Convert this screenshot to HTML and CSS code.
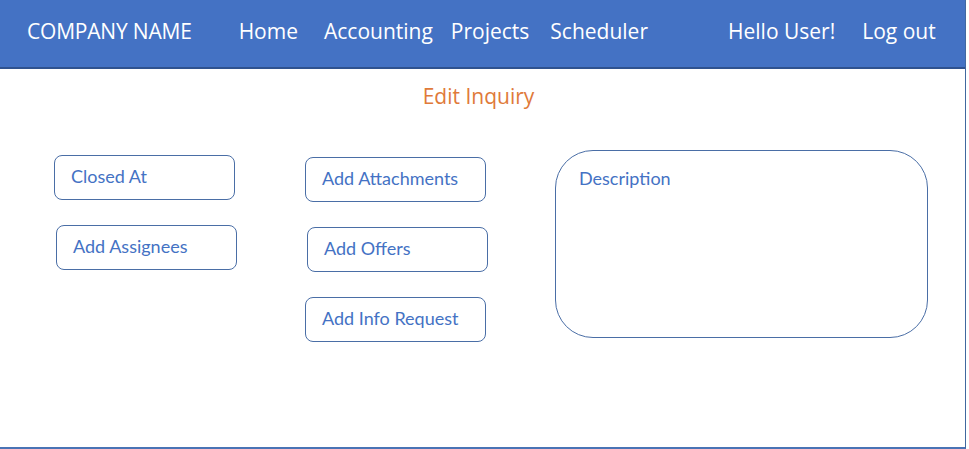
FILE: index.html
```html
<!DOCTYPE html>
<html>
<head>
<meta charset="utf-8">
<link rel="stylesheet" href="styles.css">
</head>
<body>
<div class="frame">
  <header class="topbar">
    <span class="brand">COMPANY NAME</span>
    <nav class="nav">
      <a class="nav-item home">Home</a>
      <a class="nav-item acc">Accounting</a>
      <a class="nav-item proj">Projects</a>
      <a class="nav-item sched">Scheduler</a>
    </nav>
    <div class="user">
      <span class="nav-item hello">Hello User!</span>
      <a class="nav-item logout">Log out</a>
    </div>
  </header>
  <main class="content">
    <h1 class="title">Edit Inquiry</h1>
    <div class="row">
      <div class="col col-1">
        <div class="box">Closed At</div>
        <div class="box shift-2">Add Assignees</div>
      </div>
      <div class="col col-2">
        <div class="box">Add Attachments</div>
        <div class="box shift-2">Add Offers</div>
        <div class="box">Add Info Request</div>
      </div>
      <div class="col col-3">
        <div class="desc">Description</div>
      </div>
    </div>
  </main>
</div>
</body>
</html>
```

FILE: styles.css
```css
* { box-sizing: border-box; }
html, body { margin: 0; padding: 0; background: #fff; }
.frame {
  width: 966px;
  height: 449px;
  border-right: 1px solid #41689f;
  border-bottom: 2px solid #4a73b5;
  display: flex;
  flex-direction: column;
}
.topbar {
  height: 69px;
  background: #4472c4;
  border-bottom: 2px solid #2f528f;
  display: flex;
  align-items: center;
  padding: 0 0 6px 27px;
  color: #fff;
  font-family: "Open Sans", "Noto Sans", sans-serif;
  font-size: 21px;
}
.brand { letter-spacing: -0.2px; }
.nav { display: flex; margin-left: 47px; }
.nav-item { color: #fff; text-decoration: none; }
.acc { margin-left: 26px; }
.proj { margin-left: 18px; }
.sched { margin-left: 21px; }
.user { display: flex; margin-left: 80px; }
.logout { margin-left: 27px; }
.content { flex: 1; }
.title {
  margin: 13px 0 0;
  text-align: center;
  font-family: "Open Sans", "Noto Sans", sans-serif;
  font-weight: 400;
  font-size: 21px;
  line-height: 28px;
  color: #e07a3a;
  padding-right: 8px;
}
.row {
  display: flex;
  align-items: flex-start;
  margin-top: 40px;
  padding-left: 54px;
}
.col { display: flex; flex-direction: column; gap: 25px; }
.col-1 { width: 251px; margin-top: 5px; }
.col-2 { width: 250px; margin-top: 7px; }
.box {
  width: 181px;
  height: 45px;
  border: 1px solid #4a6ea6;
  border-radius: 8px;
  display: flex;
  align-items: center;
  padding: 0 0 3px 16px;
  font-family: "Lato", "Open Sans", sans-serif;
  font-size: 18px;
  color: #4472c4;
}
.shift-2 { margin-left: 2px; }
.desc {
  width: 373px;
  height: 188px;
  border: 1px solid #4a6ea6;
  border-radius: 38px;
  padding: 16px 0 0 23px;
  font-family: "Lato", "Open Sans", sans-serif;
  font-size: 18px;
  color: #4472c4;
}
```
